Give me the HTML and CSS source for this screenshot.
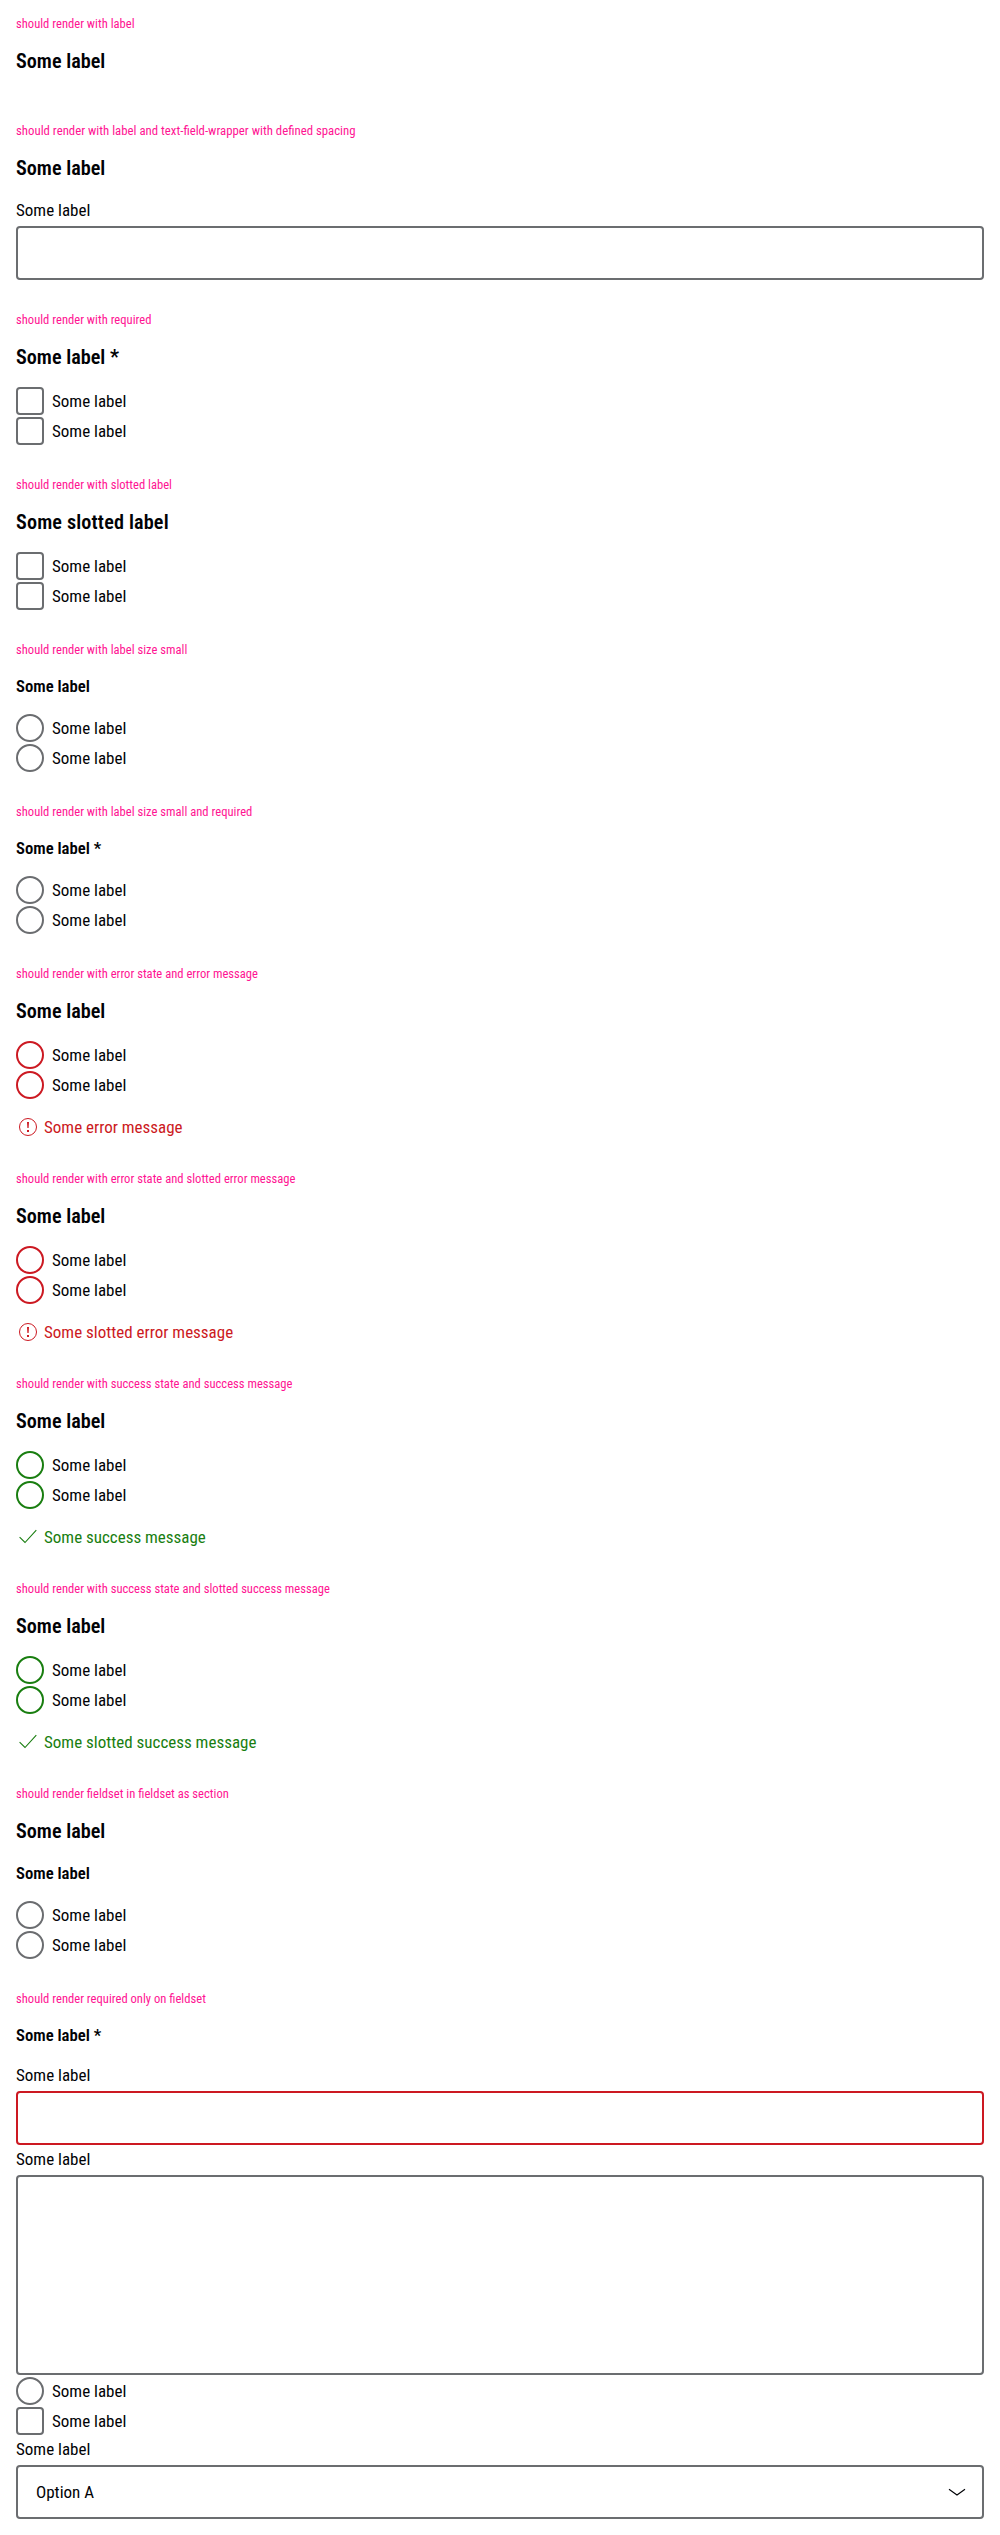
FILE: index.html
```
<!DOCTYPE html>
<html lang="en">
<head>
<meta charset="utf-8">
<title>Fieldset</title>
<link rel="stylesheet" href="styles.css">
</head>
<body>
<svg width="0" height="0" class="sprite" aria-hidden="true">
  <symbol id="error" viewBox="0 0 24 24"><circle cx="12" cy="12" r="8.5" fill="none" stroke="currentColor" stroke-width="1"/><path d="M11 7h2l-.4 6h-1.2zM11 15h2v2h-2z" fill="currentColor"/></symbol>
  <symbol id="check" viewBox="0 0 24 24"><path d="M3.6 12.2 9 17.5 20.3 5.2" fill="none" stroke="currentColor" stroke-width="1.1"/></symbol>
</svg>

<section class="example">
  <p class="caption">should render with label</p>
  <h2 class="legend">Some label</h2>
</section>

<section class="example">
  <p class="caption wide">should render with label and text-field-wrapper with defined spacing</p>
  <h2 class="legend">Some label</h2>
  <div class="field"><span class="field-label">Some label</span><div class="box"></div></div>
</section>

<section class="example">
  <p class="caption">should render with required</p>
  <h2 class="legend">Some label *</h2>
  <div class="options">
    <label class="option"><span class="control"></span><span>Some label</span></label>
    <label class="option"><span class="control"></span><span>Some label</span></label>
  </div>
</section>

<section class="example">
  <p class="caption">should render with slotted label</p>
  <h2 class="legend slotted">Some slotted label</h2>
  <div class="options">
    <label class="option"><span class="control"></span><span>Some label</span></label>
    <label class="option"><span class="control"></span><span>Some label</span></label>
  </div>
</section>

<section class="example">
  <p class="caption">should render with label size small</p>
  <h3 class="legend small">Some label</h3>
  <div class="options">
    <label class="option"><span class="control radio"></span><span>Some label</span></label>
    <label class="option"><span class="control radio"></span><span>Some label</span></label>
  </div>
</section>

<section class="example">
  <p class="caption">should render with label size small and required</p>
  <h3 class="legend small">Some label *</h3>
  <div class="options">
    <label class="option"><span class="control radio"></span><span>Some label</span></label>
    <label class="option"><span class="control radio"></span><span>Some label</span></label>
  </div>
</section>

<section class="example error">
  <p class="caption">should render with error state and error message</p>
  <h2 class="legend">Some label</h2>
  <div class="options">
    <label class="option"><span class="control radio"></span><span>Some label</span></label>
    <label class="option"><span class="control radio"></span><span>Some label</span></label>
  </div>
  <p class="message"><svg class="icon"><use href="#error"/></svg><span>Some error message</span></p>
</section>

<section class="example error">
  <p class="caption">should render with error state and slotted error message</p>
  <h2 class="legend">Some label</h2>
  <div class="options">
    <label class="option"><span class="control radio"></span><span>Some label</span></label>
    <label class="option"><span class="control radio"></span><span>Some label</span></label>
  </div>
  <p class="message"><svg class="icon"><use href="#error"/></svg><span>Some slotted error message</span></p>
</section>

<section class="example success">
  <p class="caption">should render with success state and success message</p>
  <h2 class="legend">Some label</h2>
  <div class="options">
    <label class="option"><span class="control radio"></span><span>Some label</span></label>
    <label class="option"><span class="control radio"></span><span>Some label</span></label>
  </div>
  <p class="message"><svg class="icon"><use href="#check"/></svg><span>Some success message</span></p>
</section>

<section class="example success">
  <p class="caption">should render with success state and slotted success message</p>
  <h2 class="legend">Some label</h2>
  <div class="options">
    <label class="option"><span class="control radio"></span><span>Some label</span></label>
    <label class="option"><span class="control radio"></span><span>Some label</span></label>
  </div>
  <p class="message"><svg class="icon"><use href="#check"/></svg><span>Some slotted success message</span></p>
</section>

<section class="example">
  <p class="caption">should render fieldset in fieldset as section</p>
  <h2 class="legend">Some label</h2>
  <h3 class="legend small">Some label</h3>
  <div class="options">
    <label class="option"><span class="control radio"></span><span>Some label</span></label>
    <label class="option"><span class="control radio"></span><span>Some label</span></label>
  </div>
</section>

<section class="example">
  <p class="caption">should render required only on fieldset</p>
  <h3 class="legend small">Some label *</h3>
  <div class="options">
    <div class="field error"><span class="field-label">Some label</span><div class="box"></div></div>
    <div class="field"><span class="field-label">Some label</span><div class="box area"></div></div>
    <label class="option"><span class="control radio"></span><span>Some label</span></label>
    <label class="option"><span class="control"></span><span>Some label</span></label>
    <div class="field"><span class="field-label">Some label</span>
      <div class="box select"><span>Option A</span><svg class="icon" viewBox="0 0 24 24"><path d="M4 9.2 12 15 20 9.2" fill="none" stroke="currentColor" stroke-width="1.1"/></svg></div>
    </div>
  </div>
</section>
</body>
</html>
```

FILE: styles.css
```
* { box-sizing: border-box; }
body {
  margin: 0;
  background: #fff;
  color: #010205;
  font: 400 17px/24px "Roboto Condensed", Roboto, sans-serif;
  --line: #6b6d70;
}
.sprite { display: block; }
.example { padding: 16px; }
.caption {
  margin: 0 0 16px;
  color: #ff1493;
  font-size: 12.6px;
  line-height: 16px;
}
.caption.wide { font-size: 12.8px; }
.legend {
  margin: 0 0 16px;
  font-size: 20.2px;
  line-height: 27px;
  font-weight: 600;
}
.legend.slotted { letter-spacing: 0.15px; }
.legend.small {
  padding-top: 1px;
  font-size: 16.7px;
  line-height: 23px;
}
.options { display: flex; flex-direction: column; gap: 2px; }
.option { display: flex; align-items: center; gap: 8px; height: 28px; }
.control {
  width: 28px;
  height: 28px;
  border: 2px solid var(--line);
  border-radius: 4px;
}
.radio { border-radius: 50%; }
.field { display: flex; flex-direction: column; gap: 4px; }
.box { height: 54px; border: 2px solid var(--line); border-radius: 4px; }
.area { height: 200px; }
.select {
  display: flex;
  align-items: center;
  justify-content: space-between;
  padding: 0 13px 0 18px;
}
.icon { width: 24px; height: 24px; flex: none; }
.message {
  display: flex;
  gap: 4px;
  margin: 16px 0 0;
  color: var(--line);
}
.error { --line: #cc1922; }
.success { --line: #197e10; }
```
